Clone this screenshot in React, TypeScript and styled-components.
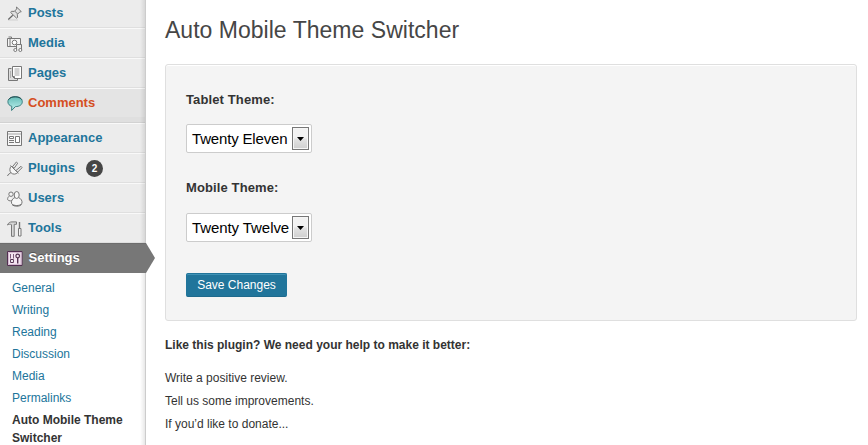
import React from "react";
import styled, { createGlobalStyle } from "styled-components";

const GlobalStyle = createGlobalStyle`
  * { box-sizing: border-box; }
  body {
    margin: 0;
    overflow: hidden;
    background: #fff;
    color: #333;
    font-family: "Liberation Sans", Arial, sans-serif;
    font-size: 12px;
  }
`;

const Page = styled.div`
  display: flex;
  height: 445px;
  overflow: hidden;
`;

const Sidebar = styled.nav`
  position: relative;
  flex: none;
  width: 146px;
  height: 445px;
  background: #ececec;
  border-right: 1px solid #ccc;
`;

const EdgeShade = styled.div`
  position: absolute;
  top: 0;
  right: 0;
  bottom: 0;
  width: 5px;
  background: linear-gradient(to right, rgba(0, 0, 0, 0), rgba(0, 0, 0, 0.09));
  pointer-events: none;
`;

const MenuList = styled.div`
  display: flex;
  flex-direction: column;
  margin-top: -2px;
`;

const MenuItem = styled.a<{ $awaiting?: boolean }>`
  display: flex;
  align-items: center;
  height: 30px;
  padding-left: 7px;
  border-top: 1px solid #f9f9f9;
  border-bottom: 1px solid #dfdfdf;
  background: ${(p) => (p.$awaiting ? "#e4e4e4" : "#ececec")};
  color: ${(p) => (p.$awaiting ? "#d54e21" : "#21759b")};
  font-size: 13px;
  font-weight: bold;
  line-height: 18px;
`;

const CurrentItem = styled(MenuItem)`
  position: relative;
  z-index: 1;
  width: 146px;
  border-color: #6d6d6d #777 #777;
  background: #777;
  color: #fff;
  text-shadow: 0 -1px 0 #555;
`;

const CurrentArrow = styled.span`
  position: absolute;
  top: -1px;
  left: 100%;
  width: 9px;
  height: 30px;
  background: #777;
  clip-path: polygon(0 0, 100% 50%, 0 100%);
`;

const IconBox = styled.span`
  display: flex;
  width: 16px;
  height: 16px;
  margin: 2px 5px 0 0;

  svg {
    display: block;
    overflow: visible;
  }
`;

const ItemLabel = styled.span<{ $inset?: number }>`
  margin-left: ${(p) => p.$inset ?? 0}px;
`;

const Count = styled.span`
  display: flex;
  align-items: center;
  justify-content: center;
  width: 17px;
  height: 17px;
  margin: 1px 0 0 11px;
  border-radius: 50%;
  background: #464646;
  color: #fff;
  font-size: 10px;
  line-height: 17px;
`;

const Separator = styled.div`
  height: 5px;
  background: #dfdfdf;
  border-bottom: 1px solid #d2d2d2;
`;

const Submenu = styled.div`
  display: flex;
  flex-direction: column;
  height: 180px;
  padding: 4px 0 0 12px;
  background: #fff;
`;

const SubItem = styled.a<{ $current?: boolean }>`
  padding: 2px 0;
  color: ${(p) => (p.$current ? "#333" : "#21759b")};
  font-weight: ${(p) => (p.$current ? "bold" : "normal")};
  line-height: 18px;
`;

const Content = styled.main`
  flex: 1;
  padding: 16px 11px 0 19px;
`;

const Title = styled.h1`
  margin: 0;
  color: #464646;
  font-size: 23px;
  font-weight: normal;
  line-height: 29px;
  letter-spacing: 0.02px;
  white-space: nowrap;
`;

const Panel = styled.form`
  display: flex;
  flex-direction: column;
  align-items: flex-start;
  height: 257px;
  margin-top: 19px;
  padding: 26px 20px 0;
  border: 1px solid #dfdfdf;
  border-radius: 3px;
  background: #f4f4f4;
  box-shadow: inset 0 1px 0 #fff;
`;

const Field = styled.div<{ $gap: number }>`
  display: flex;
  flex-direction: column;
  gap: ${(p) => p.$gap}px;
  height: 88px;
`;

const FieldLabel = styled.label`
  height: 18px;
  font-size: 13px;
  font-weight: bold;
  line-height: 18px;
  letter-spacing: 0.12px;
`;

const SelectBox = styled.div`
  display: flex;
  align-items: center;
  justify-content: space-between;
  width: 126px;
  height: 29px;
  padding: 0 2px 0 5px;
  border: 1px solid #ccc;
  border-radius: 2px;
  background: #fff;
  color: #000;
  font-size: 15px;
  white-space: nowrap;
`;

const SelectValue = styled.span<{ $tracking: number }>`
  letter-spacing: ${(p) => p.$tracking}px;
`;

const DropButton = styled.span`
  display: flex;
  align-items: center;
  justify-content: center;
  flex: none;
  width: 17px;
  height: 23px;
  border: 1px solid #777;
  background: linear-gradient(#f2f2f2 0 45%, #e2e2e2 55%, #cfcfcf);
  box-shadow: inset 0 0 0 1px #f6f6f6;
`;

const SaveButton = styled.button`
  width: 101px;
  height: 24px;
  margin-top: 6px;
  padding: 0;
  border: 1px solid #21759b;
  border-bottom-color: #1e6a8d;
  border-radius: 2px;
  background: #21759b;
  box-shadow: inset 0 1px 0 rgba(120, 200, 230, 0.35);
  color: #fff;
  font-family: inherit;
  font-size: 12px;
  line-height: 22px;
`;

const HelpHeading = styled.p`
  margin: 15px 0 13px;
  font-weight: bold;
  line-height: 18px;
`;

const HelpLine = styled.p`
  margin: 0;
  line-height: 23px;
`;

const Glyph = ({ children }: { children: React.ReactNode }) => (
  <svg width="16" height="16" viewBox="0 0 16 16" fill="none" stroke="#777" strokeWidth="1">
    {children}
  </svg>
);

const PinIcon = () => (
  <Glyph>
    <path d="M1 14h10" stroke="#cfcfcf" />
    <path d="M9.500 1l4.800 4.600-1.800.6-2.200 2.300.3 3-1.100.6-5.800-5.600.8-1.200 2.900.1 2.300-2.500z" fill="#e2e2e2" />
    <path d="M7.800 5.200l3 2.900" />
    <path d="M5.800 9.200L1.300 13.500" stroke="#666" strokeWidth="1.200" />
  </Glyph>
);

const MediaIcon = () => (
  <Glyph>
    <path d="M.5 2.500h13v8H.5zM1.500 1h3v1.500M3 3v7" fill="#f5f5f5" />
    <circle cx="7.500" cy="6.500" r="2.300" fill="#fff" />
    <path d="M9.500 13.500v-5h5v5" fill="#ececec" />
    <circle cx="8.300" cy="14" r="1.500" fill="#fff" />
    <circle cx="13.300" cy="14" r="1.500" fill="#fff" />
  </Glyph>
);

const PagesIcon = () => (
  <Glyph>
    <path d="M4.500 2.500h-3v12h9v-2" fill="#ddd" />
    <path d="M5.500.5h9v12h-7l-2-2z" fill="#fff" />
    <path d="M7.500 3h5M7.500 5h5M7.500 7h5M7.500 9h5" stroke="#a4a4a4" />
    <path d="M3.500 5v7" stroke="#b2b2b2" />
    <path d="M5.500 10.500h2v2" />
  </Glyph>
);

const CommentIcon = () => (
  <Glyph>
    <defs>
      <linearGradient id="bubble" x1="0" y1="0" x2="0" y2="1">
        <stop offset="0" stopColor="#65bdb8" />
        <stop offset="1" stopColor="#c1f2ef" />
      </linearGradient>
    </defs>
    <path
      d="M8.200.8C4 .8.900 2.700.9 5.700c0 2.600 1.800 4 3.900 4.600l-.2 4.200L8.400 10.600c4.100 0 6.900-1.900 6.900-4.900S12.400.8 8.200.8z"
      fill="url(#bubble)"
      stroke="#397e80"
    />
    <path d="M1.600 3.700C2.900 1.600 5 .8 8.200.8c3 0 5.100.8 6.400 2.700" stroke="#234d50" />
  </Glyph>
);

const AppearanceIcon = () => (
  <Glyph>
    <path d="M.5.5h14v14H.5z" fill="#f7f7f7" />
    <path d="M1 3h13" stroke="#a5a5a5" />
    <path d="M2.500 5.500h4v2h-4zM8.500 5.500h4v6h-4z" fill="#fff" />
    <path d="M2 9.500h5M2 11.500h5" />
  </Glyph>
);

const PluginIcon = () => (
  <Glyph>
    <path d="M4.200 5.200l6.500 6.400C8.700 13.500 6 13.600 4.200 12 2.500 10.200 2.300 7.300 4.200 5.200z" fill="#f7f7f7" />
    <path d="M3.500 4.500l7.900 7.800" />
    <path d="M5.300 5.900L9.400 1l1.300 1.200-3.500 5zM9 9.500L14 5.300l1.200 1.300-4.600 4.500z" fill="#eee" />
    <path d="M4 11.500L1 13.800l-.4 1.200" />
  </Glyph>
);

const UsersIcon = () => (
  <Glyph>
    <path d="M2.500 5C1 5.800.4 7.200.7 8.700c1 1.500 4.200 1.600 5.500.3" fill="#f4f4f4" />
    <circle cx="4" cy="3.200" r="2.200" fill="#f4f4f4" />
    <path d="M8 6.500C5.200 7.600 4 10 4.600 12.500c1.700 2.700 8.500 2.700 10.300 0 .6-2.500-.7-4.900-3.400-6" fill="#f7f7f7" />
    <ellipse cx="9.700" cy="4" rx="2.500" ry="3.500" fill="#f7f7f7" />
    <path d="M5 13.500c2 2.200 7.700 2.200 9.500 0" stroke="#6b6b6b" />
  </Glyph>
);

const ToolsIcon = () => (
  <Glyph>
    <path d="M.5 4C1.500 1.600 3 .9 5 .9h4.500v2.400H7.200v12H4.500V3.700C3 2.900 2 3.200.5 4z" fill="#d8d8d8" />
    <path d="M12.500 1v7" strokeWidth="1.400" />
    <path d="M11.500 7.500h2.500v7.500h-2.500z" fill="#f4f4f4" />
  </Glyph>
);

const SettingsIcon = () => (
  <Glyph>
    <path d="M.5.5h14.500v14H.5z" fill="#f4e4f1" stroke="#522f51" />
    <path d="M1.500 1.500h12.500v12H1.500z" stroke="#d3b8cf" />
    <path d="M3.500 3v4.500M6.500 3v4.500" stroke="#7d5b7a" />
    <path d="M3.600 8.500h2.800v3H3.600z" fill="#fff" stroke="#543352" />
    <circle cx="10.700" cy="5" r="1.800" stroke="#543352" strokeWidth="1.200" />
    <path d="M10.700 7v5.500" stroke="#543352" strokeWidth="1.400" />
  </Glyph>
);

const topItems = [
  { label: "Posts", icon: <PinIcon /> },
  { label: "Media", icon: <MediaIcon /> },
  { label: "Pages", icon: <PagesIcon /> },
  { label: "Comments", icon: <CommentIcon />, awaiting: true },
];

const lowerItems = [
  { label: "Appearance", icon: <AppearanceIcon /> },
  { label: "Plugins", icon: <PluginIcon />, count: 2 },
  { label: "Users", icon: <UsersIcon /> },
  { label: "Tools", icon: <ToolsIcon /> },
];

const settingsPages = ["General", "Writing", "Reading", "Discussion", "Media", "Permalinks"];

interface ThemeFieldProps {
  label: string;
  value: string;
  gap: number;
  tracking: number;
}

const ThemeField = ({ label, value, gap, tracking }: ThemeFieldProps) => (
  <Field $gap={gap}>
    <FieldLabel>{label}</FieldLabel>
    <SelectBox role="combobox" aria-label={label}>
      <SelectValue $tracking={tracking}>{value}</SelectValue>
      <DropButton>
        <svg width="7" height="4" viewBox="0 0 7 4">
          <path d="M0 0h7L3.500 4z" fill="#000" />
        </svg>
      </DropButton>
    </SelectBox>
  </Field>
);

export default function App() {
  return (
    <Page>
      <GlobalStyle />
      <Sidebar>
        <MenuList>
          {topItems.map((item) => (
            <MenuItem key={item.label} $awaiting={item.awaiting}>
              <IconBox>{item.icon}</IconBox>
              <ItemLabel>{item.label}</ItemLabel>
            </MenuItem>
          ))}
          <Separator />
          {lowerItems.map((item) => (
            <MenuItem key={item.label}>
              <IconBox>{item.icon}</IconBox>
              <ItemLabel>{item.label}</ItemLabel>
              {item.count && <Count>{item.count}</Count>}
            </MenuItem>
          ))}
          <CurrentItem>
            <IconBox><SettingsIcon /></IconBox>
            <ItemLabel $inset={0.5}>Settings</ItemLabel>
            <CurrentArrow />
          </CurrentItem>
          <Submenu>
            {settingsPages.map((name) => (
              <SubItem key={name}>{name}</SubItem>
            ))}
            <SubItem $current>Auto Mobile Theme Switcher</SubItem>
          </Submenu>
        </MenuList>
        <EdgeShade />
      </Sidebar>
      <Content>
        <Title>Auto Mobile Theme Switcher</Title>
        <Panel>
          <ThemeField label="Tablet Theme:" value="Twenty Eleven" gap={15} tracking={-0.17} />
          <ThemeField label="Mobile Theme:" value="Twenty Twelve" gap={16} tracking={-0.08} />
          <SaveButton type="button">Save Changes</SaveButton>
        </Panel>
        <HelpHeading>Like this plugin? We need your help to make it better:</HelpHeading>
        <HelpLine>Write a positive review.</HelpLine>
        <HelpLine>Tell us some improvements.</HelpLine>
        <HelpLine>If you’d like to donate...</HelpLine>
      </Content>
    </Page>
  );
}
